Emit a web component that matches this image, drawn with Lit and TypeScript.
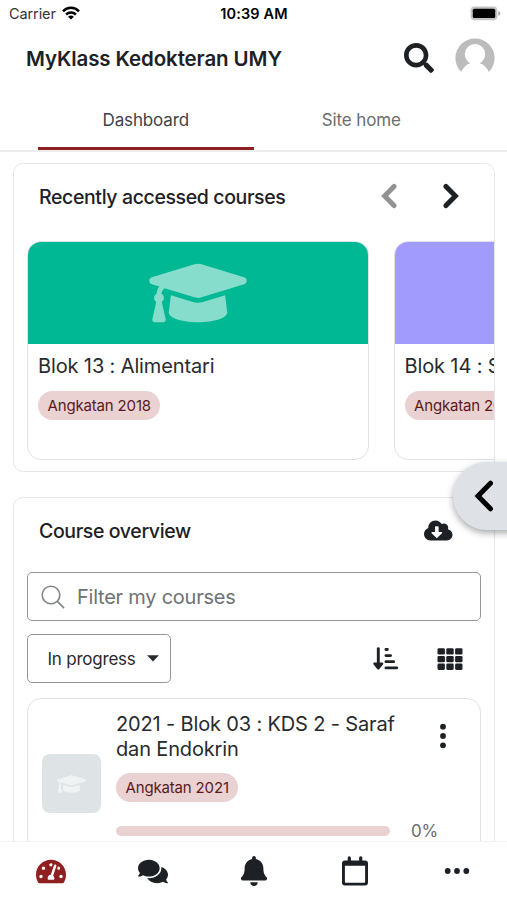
import { LitElement, html, css, svg } from "lit";
import { customElement, property } from "lit/decorators.js";

const CAP = "M622.34 153.2L343.4 67.5c-15.2-4.67-31.6-4.67-46.79 0L17.66 153.2c-23.54 7.23-23.54 38.36 0 45.59l48.63 14.94c-10.67 13.19-17.23 29.28-17.88 46.9C38.78 266.15 32 276.11 32 288c0 10.78 5.68 19.85 13.86 25.65L20.33 428.53C18.11 438.52 25.71 448 35.94 448h56.11c10.24 0 17.84-9.48 15.62-19.47L82.14 313.65C90.32 307.85 96 298.78 96 288c0-11.57-6.47-21.25-15.66-26.87.76-15.02 8.44-28.3 20.69-36.72L296.6 284.5c9.06 2.78 26.44 6.25 46.79 0l278.95-85.7c23.55-7.24 23.55-38.36 0-45.6zM352.79 315.09c-28.53 8.76-52.84 3.92-65.59 0l-145.02-44.55L128 384c0 35.35 85.96 64 192 64s192-28.65 192-64l-14.18-113.47-145.03 44.56z";
const GAUGE = "M288 32C128.94 32 0 160.94 0 320c0 52.8 14.25 102.26 39.06 144.8 5.61 9.62 16.3 15.2 27.44 15.2h443c11.14 0 21.83-5.58 27.44-15.2C561.75 422.26 576 372.8 576 320c0-159.06-128.94-288-288-288zm0 64c14.71 0 26.58 10.13 30.32 23.65-1.11 2.26-2.64 4.23-3.45 6.67l-9.22 27.67c-5.13 3.49-10.97 6.01-17.64 6.01-17.67 0-32-14.33-32-32S270.33 96 288 96zM96 384c-17.67 0-32-14.33-32-32s14.33-32 32-32 32 14.33 32 32-14.33 32-32 32zm48-160c-17.67 0-32-14.33-32-32s14.33-32 32-32 32 14.33 32 32-14.33 32-32 32zm246.77-72.41l-61.33 184C343.13 347.33 352 364.54 352 384c0 11.72-3.38 22.55-8.88 32H232.88c-5.5-9.45-8.88-20.28-8.88-32 0-33.94 26.5-61.43 59.9-63.59l61.34-184.01c4.17-12.56 17.73-19.45 30.36-15.17 12.57 4.19 19.35 17.79 15.17 30.36zm14.66 57.2l15.52-46.55c3.47-1.29 7.13-2.23 11.05-2.23 17.67 0 32 14.33 32 32s-14.33 32-32 32c-11.38-.01-20.89-6.28-26.57-15.22zM480 384c-17.67 0-32-14.33-32-32s14.33-32 32-32 32 14.33 32 32-14.33 32-32 32z";
const CHAT = "M416 192c0-88.4-93.1-160-208-160S0 103.6 0 192c0 34.3 14.1 65.9 38 92-13.4 30.2-35.5 54.2-35.8 54.5-2.2 2.3-2.8 5.7-1.5 8.7S4.8 352 8 352c36.6 0 66.9-12.3 88.7-25 32.2 15.7 70.3 25 111.3 25 114.9 0 208-71.6 208-160zm122 220c23.9-26 38-57.7 38-92 0-66.9-53.5-124.2-129.3-148.1.9 6.6 1.3 13.3 1.3 20.1 0 105.9-107.7 192-240 192-10.8 0-21.3-.8-31.7-1.9C207.8 439.6 281.8 480 368 480c41 0 79.1-9.2 111.3-25 21.8 12.7 52.1 25 88.7 25 3.2 0 6.1-1.9 7.3-4.8 1.3-2.9.7-6.3-1.5-8.7-.3-.3-22.4-24.2-35.8-54.5z";
const BELL = "M224 512c35.32 0 63.97-28.65 63.97-64H160.03c0 35.35 28.65 64 63.97 64zm215.39-149.71c-19.32-20.76-55.47-51.99-55.47-154.29 0-77.7-54.48-139.9-127.94-155.16V32c0-17.67-14.32-32-31.98-32s-31.98 14.33-31.98 32v20.84C118.56 68.1 64.08 130.3 64.08 208c0 102.3-36.15 133.53-55.47 154.29-6 6.45-8.66 14.16-8.61 21.71.11 16.4 12.98 32 32.1 32h383.8c19.12 0 32-15.6 32.1-32 .05-7.55-2.61-15.27-8.61-21.71z";
const CLOUD = "M537.6 226.6c4.1-10.7 6.4-22.4 6.4-34.6 0-53-43-96-96-96-19.7 0-38.1 6-53.3 16.2C367 64.2 315.3 32 256 32c-88.4 0-160 71.6-160 160 0 2.7.1 5.4.2 8.1C40.2 219.8 0 273.2 0 336c0 79.5 64.5 144 144 144h368c70.7 0 128-57.3 128-128 0-61.9-44-113.6-102.4-125.4zm-132.9 88.7L299.3 420.7c-6.2 6.2-16.4 6.2-22.6 0L171.3 315.3c-10.1-10.1-2.9-27.3 11.3-27.3H248V176c0-8.8 7.2-16 16-16h48c8.8 0 16 7.2 16 16v112h65.4c14.2 0 21.4 17.2 11.3 27.3z";
const SEARCH = "M505 442.7L405.3 343c-4.5-4.5-10.6-7-17-7H372c27.6-35.3 44-79.7 44-128C416 93.1 322.9 0 208 0S0 93.1 0 208s93.1 208 208 208c48.3 0 92.7-16.4 128-44v16.3c0 6.4 2.5 12.5 7 17l99.7 99.7c9.4 9.4 24.6 9.4 33.9 0l28.3-28.3c9.4-9.4 9.4-24.6.1-34zM208 336c-70.7 0-128-57.2-128-128 0-70.7 57.2-128 128-128 70.7 0 128 57.2 128 128 0 70.7-57.2 128-128 128z";

const line = (d: string, w: number) =>
  svg`<path d=${d} fill="none" stroke="currentColor" stroke-width=${w} stroke-linecap="round"/>`;

const icons: Record<string, [string, unknown]> = {
  cap: ["0 0 640 512", svg`<path d=${CAP}/>`],
  gauge: ["0 0 576 512", svg`<path d=${GAUGE}/>`],
  chat: ["0 0 576 512", svg`<path d=${CHAT}/>`],
  bell: ["0 0 448 512", svg`<path d=${BELL}/>`],
  cloud: ["0 0 640 512", svg`<path d=${CLOUD}/>`],
  search: ["0 0 512 512", svg`<path d=${SEARCH}/>`],
  lens: ["0 0 24 24", svg`<circle cx="10" cy="10" r="8.8" fill="none" stroke="currentColor" stroke-width="1.6"/>${line("M16.4 16.4L22.6 22.6", 1.7)}`],
  left: ["0 0 16 26", line("M13 3.4L3.6 13L13 22.6", 5)],
  right: ["0 0 16 26", line("M3 3.4L12.4 13L3 22.6", 5)],
  pull: ["0 0 20 32", line("M16.5 3.2L4 16L16.5 28.8", 5)],
  sort: ["0 0 26 24", svg`${line("M5.3 1.6V20", 2.9)}<path d="M.6 17.4c-.7-.8-.2-1.9.9-1.9h7.6c1.1 0 1.6 1.1.9 1.9l-3.7 4.6c-.6.7-1.5.7-2.1 0z"/>${line("M12.9 2.5H14.4M12.9 8.6H17.6M12.9 14.7H20.7M12.9 20.8H23.8", 2.8)}`],
  grid: ["0 0 26 24", [0, 1, 2].map(r => [0, 1, 2].map(c => svg`<rect x=${0.5 + c * 8.8} y=${1.2 + r * 7.7} width="7.4" height="6.3" rx="1.3"/>`))],
  calendar: ["0 0 28 32", svg`<path fill-rule="evenodd" d="M4 5.500h20a3 3 0 0 1 3 3v19a3 3 0 0 1-3 3H4a3 3 0 0 1-3-3v-19a3 3 0 0 1 3-3zM3.900 10.700v16.300c0 .5.3.8.8.8h18.600c.5 0 .8-.3.8-.8V10.700z"/>${line("M8.300 2.800V6M19.700 2.800V6", 3.2)}`],
  dots: ["0 0 26 26", svg`<circle cx="3.700" cy="13" r="2.900"/><circle cx="13" cy="13" r="2.900"/><circle cx="22.300" cy="13" r="2.900"/>`],
  kebab: ["0 0 26 26", svg`<circle cy="3.700" cx="13" r="2.900"/><circle cy="13" cx="13" r="2.900"/><circle cy="22.300" cx="13" r="2.900"/>`],
  caret: ["0 0 12 7", svg`<path d="M0 .3h12L6 6.500z"/>`],
  wifi: ["0 0 18 14", svg`<g fill="none" stroke="currentColor" stroke-width="2.500"><path d="M1 5.300C5.400.7 12.600.7 17 5.300"/><path d="M4.100 8.500c2.800-2.700 7-2.700 9.800 0"/></g><path d="M6.100 10.700c1.700-1.500 4.100-1.500 5.800 0L9 13.600z"/>`],
  battery: ["0 0 31 15", svg`<rect x=".6" y=".6" width="26.800" height="13.600" rx="4" fill="#c4c4c4"/><rect x="2.800" y="2.700" width="22.400" height="9.400" rx="1.500"/><path d="M28.300 5c2.700.6 2.700 4.200 0 4.800z" fill="#aaa"/>`],
  user: ["0 0 40 40", svg`<circle cx="20" cy="20" r="19.600" fill="#bcbcbc"/><circle cx="20" cy="16.300" r="10.200" fill="#fff"/><path d="M14.600 22h10.800l-.3 3.500c3.900 1 6.500 4 8.600 8.200L33 40H7l-.7-6.300c2.100-4.200 4.700-7.200 8.600-8.200z" fill="#fff"/>`],
};

@customElement("ui-icon")
export class UiIcon extends LitElement {
  @property() name = "";
  static styles = css`
    :host { display: block; flex: none; }
    svg { display: block; width: 100%; height: 100%; fill: currentColor; }
  `;
  render() {
    const [box, body] = icons[this.name];
    return html`<svg viewBox=${box}>${body}</svg>`;
  }
}

@customElement("course-card")
export class CourseCard extends LitElement {
  @property() heading = "";
  @property() tag = "";
  @property() tone = "";
  static styles = css`
    :host { display: block; flex: none; box-sizing: border-box; width: 342px; height: 219px; border: 1px solid #dee2e4; border-radius: 14px; overflow: hidden; }
    .cover { height: 102px; display: flex; align-items: center; justify-content: center; background: #00b894; }
    .cover.violet { background: #a29bfe; }
    .cap { width: 98px; height: 78px; color: rgba(255,255,255,.53); }
    .body { padding: 9px 10px; }
    .name { font-size: 20px; line-height: 27px; letter-spacing: -.13px; white-space: nowrap; color: #282b2e; }
    .tag { display: inline-block; margin-top: 11px; padding: 0 9.500px; line-height: 29px; border-radius: 15px; background: #e9d2d1; color: #5a1a1a; font-size: 15px; letter-spacing: -.16px; white-space: nowrap; }
  `;
  render() {
    return html`
      <div class="cover ${this.tone}">${this.tone ? "" : html`<ui-icon class="cap" name="cap"></ui-icon>`}</div>
      <div class="body"><div class="name">${this.heading}</div><span class="tag">${this.tag}</span></div>`;
  }
}

@customElement("app-root")
export class AppRoot extends LitElement {
  static styles = css`
    :host { display: flex; flex-direction: column; position: relative; height: 900px; overflow: hidden; background: #fff; color: #1d2125; font-family: Inter, "Liberation Sans", sans-serif; }
    * { box-sizing: border-box; }
    .status { flex: none; height: 27px; display: grid; grid-template-columns: 1fr auto 1fr; align-items: center; padding: 0 7px 0 9px; color: #000; font-size: 14.500px; }
    .carrier { display: flex; align-items: center; gap: 6px; color: #333; letter-spacing: -.1px; }
    .wifi { width: 18px; height: 14px; color: #000; margin-top: -1px; }
    .time { font-weight: 600; letter-spacing: .12px; margin-left: -1px; }
    .battery { width: 31px; height: 15px; justify-self: end; margin-right: -1px; }
    .header { flex: none; height: 63px; display: flex; align-items: center; padding: 0 12px 1px 26px; }
    .title { flex: 1; font-size: 20.500px; font-weight: 600; letter-spacing: -.11px; white-space: nowrap; }
    .find { width: 30px; height: 30px; margin-right: 21px; }
    .user { width: 40px; height: 40px; }
    .tabs { flex: none; height: 62px; display: flex; padding: 0 38px; border-bottom: 2px solid #ededee; }
    .tab { width: 216px; text-align: center; font-size: 17px; line-height: 60px; height: 60px; letter-spacing: -.12px; color: #6a6d70; }
    .tab.on { color: #3f4246; border-bottom: 3px solid #8f2020; letter-spacing: -.15px; }
    .content { flex: 1; min-height: 0; overflow: hidden; padding: 11px 12.500px 0 13px; display: flex; flex-direction: column; gap: 25px; }
    .panel { flex: none; border: 1.500px solid #e4e7e9; border-radius: 10px; overflow: hidden; }
    .recent { height: 309px; }
    .panel-head { display: flex; align-items: center; padding-left: 25px; height: 66px; font-size: 19.500px; font-weight: 500; letter-spacing: -.38px; }
    .panel-head .label { flex: 1; white-space: nowrap; }
    .recent .panel-head { height: 65px; margin-bottom: 12px; }
    .arrow { width: 16px; height: 26px; margin-right: 46px; margin-top: -2px; }
    .arrow.dim { color: #929292; }
    .arrow.next { margin-right: 35px; }
    .strip { display: flex; gap: 24.500px; padding-left: 13px; }
    .cloud { width: 28.500px; height: 23px; margin-right: 41px; margin-top: -1px; }
    .overview { padding: 0 13px; height: 420px; }
    .overview .panel-head { padding-left: 12px; margin-right: -13px; height: 65px; }
    .filter { margin-top: 9px; height: 49px; display: flex; align-items: center; gap: 12.500px; padding-left: 12.500px; border: 1.500px solid #949799; border-radius: 5px; color: #6e7275; font-size: 20px; letter-spacing: -.24px; }
    .lens { width: 24px; height: 24px; color: #828588; }
    .tools { display: flex; align-items: center; margin-top: 13px; }
    .select { width: 144px; height: 49px; display: flex; align-items: center; justify-content: space-between; padding: 0 11.500px 0 19.500px; border: 1.500px solid #949799; border-radius: 5px; font-size: 17px; letter-spacing: -.22px; white-space: nowrap; color: #282b2e; }
    .caret { width: 12px; height: 7px; }
    .sort { width: 26px; height: 24px; margin-left: auto; margin-right: 38px; }
    .grid { width: 26px; height: 24px; margin-right: 18px; }
    .item { display: flex; margin-top: 15px; height: 200px; border: 1px solid #e0e3e5; border-radius: 14px; padding: 13px 0 0 14px; }
    .thumb { flex: none; width: 59px; height: 59px; margin: 42px 15px 0 0; display: flex; align-items: center; justify-content: center; background: #dee4e6; border-radius: 8px; }
    .thumb-cap { width: 29px; height: 24px; color: #f0f3f4; }
    .info { flex: none; width: 322px; }
    .name { font-size: 20px; line-height: 24.500px; letter-spacing: -.15px; white-space: nowrap; color: #282b2e; }
    .tag { display: inline-block; margin-top: 12px; padding: 0 9.500px; line-height: 29px; border-radius: 15px; background: #e9d2d1; color: #5a1a1a; font-size: 15px; letter-spacing: -.16px; white-space: nowrap; }
    .progress { display: flex; align-items: center; gap: 21px; margin-top: 19px; font-size: 17px; line-height: 20px; letter-spacing: -.2px; color: #6a6d70; }
    .track { width: 275px; height: 10px; border-radius: 5px; background: #e9d2d1; }
    .kebab { width: 26px; height: 26px; margin: 11px 0 0 -8px; }
    .nav { flex: none; height: 59px; display: grid; grid-template-columns: repeat(5, 1fr); align-items: center; justify-items: center; border-top: 1px solid #f3f4f4; background: #fff; }
    .nav ui-icon { width: 30px; height: 27px; margin-left: 1px; }
    .nav .gauge { color: #8f2020; margin-left: 0; }
    .nav .bell { height: 30px; }
    .nav .cal { width: 28px; height: 32px; }
    .nav .more { width: 26px; height: 26px; }
    .drawer { position: absolute; right: -20px; top: 462px; width: 74px; height: 68px; display: flex; align-items: center; padding-left: 21px; border-radius: 34px 0 0 34px; background: #dee2e6; color: #000; box-shadow: 0 3px 7px rgba(0,0,0,.34); }
    .pull { width: 20px; height: 32px; }
  `;
  render() {
    return html`
      <div class="status">
        <div class="carrier">Carrier<ui-icon class="wifi" name="wifi"></ui-icon></div>
        <div class="time">10:39 AM</div>
        <ui-icon class="battery" name="battery"></ui-icon>
      </div>
      <header class="header">
        <div class="title">MyKlass Kedokteran UMY</div>
        <ui-icon class="find" name="search"></ui-icon>
        <ui-icon class="user" name="user"></ui-icon>
      </header>
      <div class="tabs"><div class="tab on">Dashboard</div><div class="tab">Site home</div></div>
      <main class="content">
        <section class="panel recent">
          <div class="panel-head">
            <span class="label">Recently accessed courses</span>
            <ui-icon class="arrow dim" name="left"></ui-icon>
            <ui-icon class="arrow next" name="right"></ui-icon>
          </div>
          <div class="strip">
            <course-card heading="Blok 13 : Alimentari" tag="Angkatan 2018"></course-card>
            <course-card heading="Blok 14 : S" tag="Angkatan 2018" tone="violet"></course-card>
          </div>
        </section>
        <section class="panel overview">
          <div class="panel-head">
            <span class="label">Course overview</span>
            <ui-icon class="cloud" name="cloud"></ui-icon>
          </div>
          <div class="filter"><ui-icon class="lens" name="lens"></ui-icon><span>Filter my courses</span></div>
          <div class="tools">
            <div class="select"><span>In progress</span><ui-icon class="caret" name="caret"></ui-icon></div>
            <ui-icon class="sort" name="sort"></ui-icon>
            <ui-icon class="grid" name="grid"></ui-icon>
          </div>
          <div class="item">
            <div class="thumb"><ui-icon class="thumb-cap" name="cap"></ui-icon></div>
            <div class="info">
              <div class="name">2021 - Blok 03 : KDS 2 - Saraf<br>dan Endokrin</div>
              <span class="tag">Angkatan 2021</span>
              <div class="progress"><div class="track"></div><span>0%</span></div>
            </div>
            <ui-icon class="kebab" name="kebab"></ui-icon>
          </div>
        </section>
      </main>
      <nav class="nav">
        <ui-icon class="gauge" name="gauge"></ui-icon>
        <ui-icon name="chat"></ui-icon>
        <ui-icon class="bell" name="bell"></ui-icon>
        <ui-icon class="cal" name="calendar"></ui-icon>
        <ui-icon class="more" name="dots"></ui-icon>
      </nav>
      <div class="drawer"><ui-icon class="pull" name="pull"></ui-icon></div>`;
  }
}
